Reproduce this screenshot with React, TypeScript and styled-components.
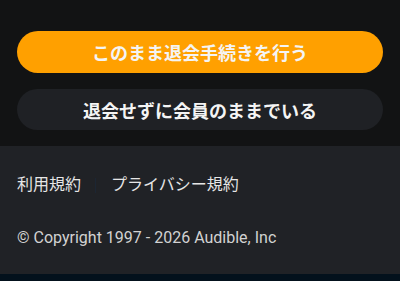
import { createGlobalStyle, styled } from "styled-components";

const GlobalStyle = createGlobalStyle`
  html, body {
    margin: 0;
    padding: 0;
    background: #121314;
  }
  body {
    font-family: Roboto, "Noto Sans CJK JP", sans-serif;
  }
`;

const App = () => {
  return (
    <Page>
      <GlobalStyle />
      <Actions>
        <Button variant="primary">このまま退会手続きを行う</Button>
        <Button variant="secondary">退会せずに会員のままでいる</Button>
      </Actions>
      <Footer>
        <Links>
          <FooterLink>利用規約</FooterLink>
          <Divider />
          <FooterLink>プライバシー規約</FooterLink>
        </Links>
        <Copyright>© Copyright 1997 - 2026 Audible, Inc</Copyright>
      </Footer>
      <BottomBar />
    </Page>
  );
};

export default App;

const Page = styled.div`
  width: 400px;
  height: 281px;
  display: flex;
  flex-direction: column;
  background: #121314;
  overflow: hidden;
`;

const Actions = styled.div`
  display: flex;
  flex-direction: column;
  gap: 16px;
  padding: 31px 17px 16px;
`;

const Button = styled.button<{ variant: "primary" | "secondary" }>`
  height: 42px;
  width: 100%;
  border: none;
  border-radius: 21px;
  display: flex;
  align-items: center;
  justify-content: center;
  font-family: Roboto, "Noto Sans CJK JP", sans-serif;
  font-size: 18px;
  font-weight: 600;
  color: #f4f4f4;
  background: ${(p) => (p.variant === "primary" ? "#ffa000" : "#1f2125")};
  cursor: pointer;

  & + & {
    height: 41px;
  }
`;

const Footer = styled.footer`
  flex: 1;
  background: #202226;
  display: flex;
  flex-direction: column;
  padding: 29px 17px 0;
  gap: 33px;
`;

const Links = styled.div`
  display: flex;
  align-items: center;
  height: 20px;
`;

const FooterLink = styled.a`
  font-size: 16px;
  color: #e6e6e6;
  text-decoration: none;
  line-height: 20px;
`;

const Divider = styled.span`
  width: 1px;
  height: 15px;
  background: #1c2633;
  margin: 0 15px 0 14px;
`;

const Copyright = styled.p`
  margin: 0;
  font-size: 16px;
  line-height: 20px;
  color: #d2d2d2;
`;

const BottomBar = styled.div`
  height: 7px;
  background: #03111c;
`;
